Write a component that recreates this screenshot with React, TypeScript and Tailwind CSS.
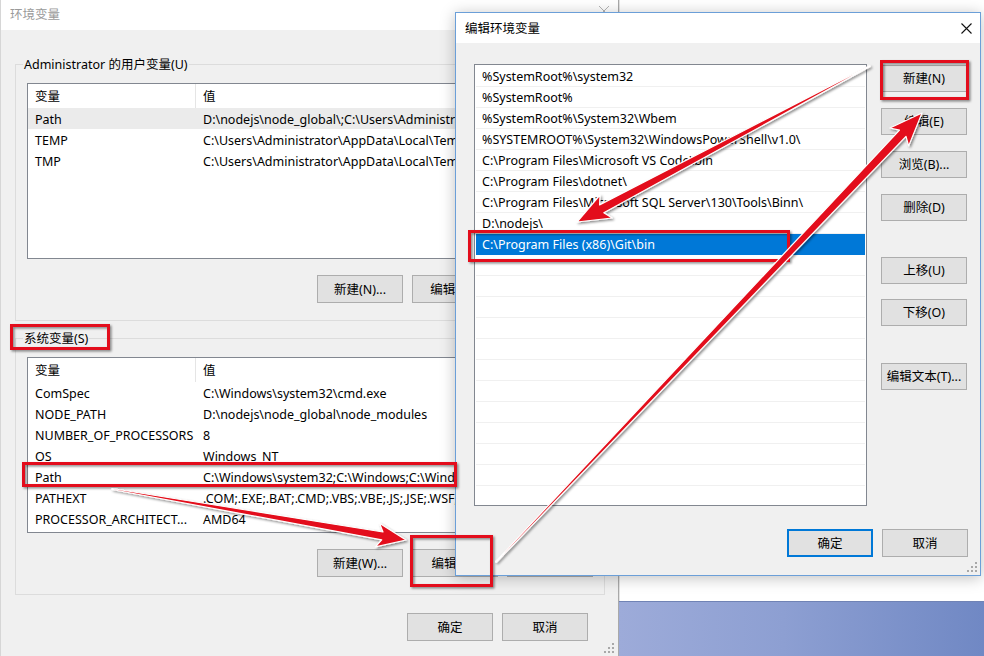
import React from "react";

type Row = [string, string];

const userRows: Row[] = [
  ["Path", "D:\\nodejs\\node_global\\;C:\\Users\\Administrator\\AppData\\Roaming\\npm"],
  ["TEMP", "C:\\Users\\Administrator\\AppData\\Local\\Temp"],
  ["TMP", "C:\\Users\\Administrator\\AppData\\Local\\Temp"],
];

const sysRows: Row[] = [
  ["ComSpec", "C:\\Windows\\system32\\cmd.exe"],
  ["NODE_PATH", "D:\\nodejs\\node_global\\node_modules"],
  ["NUMBER_OF_PROCESSORS", "8"],
  ["OS", "Windows_NT"],
  ["Path", "C:\\Windows\\system32;C:\\Windows;C:\\Windows\\System32\\Wbem;C:\\Windows\\System32"],
  ["PATHEXT", ".COM;.EXE;.BAT;.CMD;.VBS;.VBE;.JS;.JSE;.WSF;.WSH;.MSC"],
  ["PROCESSOR_ARCHITECT...", "AMD64"],
];

const pathRows = [
  "%SystemRoot%\\system32",
  "%SystemRoot%",
  "%SystemRoot%\\System32\\Wbem",
  "%SYSTEMROOT%\\System32\\WindowsPowerShell\\v1.0\\",
  "C:\\Program Files\\Microsoft VS Code\\bin",
  "C:\\Program Files\\dotnet\\",
  "C:\\Program Files\\Microsoft SQL Server\\130\\Tools\\Binn\\",
  "D:\\nodejs\\",
  "C:\\Program Files (x86)\\Git\\bin",
];

function Btn({
  children,
  focused = false,
}: {
  children: React.ReactNode;
  focused?: boolean;
}) {
  return (
    <div
      className={`w-[86px] h-[28px] shrink-0 flex items-center justify-center pt-[1px] text-black bg-[#e1e1e1] ${
        focused ? "border-2 border-[#0078d7]" : "border border-[#adadad]"
      }`}
    >
      {children}
    </div>
  );
}

function SideBtn({ children, mt }: { children: React.ReactNode; mt: string }) {
  return (
    <div
      className={`${mt} w-[86px] h-[27px] shrink-0 flex items-center justify-center pt-[1px] whitespace-nowrap text-black bg-[#e1e1e1] border border-[#adadad]`}
    >
      {children}
    </div>
  );
}

function VarList({ rows, highlight }: { rows: Row[]; highlight?: number }) {
  return (
    <div className="mt-[10px] mx-[11px] h-[176px] bg-white border border-[#828790] overflow-hidden flex flex-col">
      <div className="flex h-[24px] shrink-0">
        <div className="w-[168px] shrink-0 pl-[7px] pt-[1px] border-r border-[#e5e5e5] flex items-center">变量</div>
        <div className="pl-[7px] pt-[1px] flex items-center">值</div>
      </div>
      {rows.map(([k, v], i) => (
        <div
          key={i}
          className={`flex h-[21px] shrink-0 items-center pt-[2px] whitespace-nowrap ${
            i === highlight ? "bg-[#ebebeb]" : ""
          }`}
        >
          <div className="w-[168px] shrink-0 pl-[7px] overflow-hidden">{k}</div>
          <div className="pl-[7px]">{v}</div>
        </div>
      ))}
    </div>
  );
}

function Group({
  label,
  mt,
  pb,
  rows,
  highlight,
  buttons,
}: {
  label: string;
  mt: string;
  pb: string;
  rows: Row[];
  highlight?: number;
  buttons: string[];
}) {
  return (
    <div className={`${mt} ${pb} border border-[#dcdcdc] flex flex-col`}>
      <div className="-mt-[10px] ml-[7px] self-start px-[1px] h-[18px] leading-[19px] bg-[#f0f0f0] whitespace-nowrap">
        {label}
      </div>
      <VarList rows={rows} highlight={highlight} />
      <div className="mt-[16px] mr-[11px] flex justify-end gap-[9px]">
        {buttons.map((b) => (
          <Btn key={b}>{b}</Btn>
        ))}
      </div>
    </div>
  );
}

function Grip() {
  const dots = [
    [8, 0],
    [8, 4],
    [4, 4],
    [8, 8],
    [4, 8],
    [0, 8],
  ];
  return (
    <svg width="11" height="11" viewBox="0 0 11 11">
      {dots.map(([x, y], i) => (
        <rect key={i} x={x} y={y} width="2" height="2" fill="#a8a8a8" />
      ))}
    </svg>
  );
}

function arrowPts(
  tx: number,
  ty: number,
  hx: number,
  hy: number,
  w0: number,
  w1: number,
  L: number,
  hw: number
) {
  const dx = hx - tx;
  const dy = hy - ty;
  const len = Math.hypot(dx, dy);
  const ux = dx / len;
  const uy = dy / len;
  const nx = -uy;
  const ny = ux;
  const bx = hx - ux * L;
  const by = hy - uy * L;
  const wx = bx - ux * 5;
  const wy = by - uy * 5;
  const pts = [
    [tx + (nx * w0) / 2, ty + (ny * w0) / 2],
    [bx + (nx * w1) / 2, by + (ny * w1) / 2],
    [wx + nx * hw, wy + ny * hw],
    [hx, hy],
    [wx - nx * hw, wy - ny * hw],
    [bx - (nx * w1) / 2, by - (ny * w1) / 2],
    [tx - (nx * w0) / 2, ty - (ny * w0) / 2],
  ];
  return pts.map((p) => `${p[0].toFixed(1)},${p[1].toFixed(1)}`).join(" ");
}

function Annotations() {
  const red = "#e3101b";
  const boxes = [
    [11.5, 325.5, 97, 23],
    [23.5, 463.5, 432, 22],
    [411.5, 536.5, 80, 49],
    [469.5, 231.5, 319, 29],
    [881.5, 61.5, 86, 37],
  ];
  return (
    <svg
      className="absolute inset-0 pointer-events-none"
      width="984"
      height="656"
      viewBox="0 0 984 656"
    >
      <defs>
        <filter id="sh" x="-20%" y="-20%" width="140%" height="140%">
          <feDropShadow dx="1.5" dy="1.5" stdDeviation="1.2" floodColor="#000" floodOpacity="0.45" />
        </filter>
      </defs>
      <g filter="url(#sh)">
        {boxes.map(([x, y, w, h], i) => (
          <rect key={i} x={x} y={y} width={w} height={h} fill="none" stroke={red} strokeWidth="3" />
        ))}
        <polygon
          points={arrowPts(112, 489, 406, 540, 1, 8, 24, 12)}
          fill={red}
          stroke="#fff"
          strokeWidth="1.2"
          strokeLinejoin="round"
        />
        <polygon
          points={arrowPts(870, 66, 577, 222, 1, 9, 28, 13)}
          fill={red}
          stroke="#fff"
          strokeWidth="1.2"
          strokeLinejoin="round"
        />
        <polygon
          points={arrowPts(496, 562, 922, 113, 1, 9, 28, 13)}
          fill={red}
          stroke="#fff"
          strokeWidth="1.2"
          strokeLinejoin="round"
        />
      </g>
    </svg>
  );
}

export default function App() {
  return (
    <div className="relative w-[984px] h-[656px] overflow-hidden bg-white text-[12.5px] text-black font-['Noto_Sans','Noto_Sans_CJK_SC',sans-serif] leading-[16px]">
      <div className="flex h-full">
        {/* main window */}
        <div className="relative w-[619px] h-[656px] shrink-0 bg-[#f0f0f0] border-r border-l border-[#a9a9a9] border-l-[#d6d6d6] flex flex-col">
          <div className="h-[30px] shrink-0 bg-white flex items-center justify-between pl-[9px] pr-[9px] text-[#9a9a9a]">
            <span>环境变量</span>
            <svg width="10" height="10" viewBox="0 0 10 10" className="-mt-[8px]">
              <path d="M0 0L10 10M10 0L0 10" stroke="#b4b4b4" strokeWidth="1" />
            </svg>
          </div>
          <div className="pl-[14px] pr-[13px] flex flex-col">
            <Group
              label="Administrator 的用户变量(U)"
              mt="mt-[34px]"
              pb="pb-[17px]"
              rows={userRows}
              highlight={0}
              buttons={["新建(N)...", "编辑(E)...", "删除(D)"]}
            />
            <Group
              label="系统变量(S)"
              mt="mt-[17px]"
              pb="pb-[17px]"
              rows={sysRows}
              buttons={["新建(W)...", "编辑(I)...", "删除(L)"]}
            />
            <div className="mt-[18px] mr-[17px] flex justify-end gap-[9px]">
              <Btn>确定</Btn>
              <Btn>取消</Btn>
            </div>
          </div>
          <div className="absolute right-[3px] bottom-[2px]">
            <Grip />
          </div>
        </div>
        {/* desktop to the right */}
        <div className="flex-1 flex flex-col">
          <div className="flex-1 bg-white border-l border-[#e3e3e3]" />
          <div className="h-[55px] border-t border-[#7083b5] bg-[linear-gradient(90deg,#9dabd9_0%,#8d9fd2_45%,#7088c4_100%)]" />
        </div>
      </div>

      {/* edit dialog */}
      <div className="absolute left-[455px] top-[12px] w-[526px] h-[564px] border border-[#6b9fd8] bg-[#f0f0f0] flex flex-col shadow-[0_2px_14px_rgba(0,0,0,0.25)]">
        <div className="h-[30px] shrink-0 bg-white flex items-center justify-between pl-[9px] pr-[8px]">
          <span className="pt-[1px]">编辑环境变量</span>
          <svg width="11" height="11" viewBox="0 0 11 11">
            <path d="M0.5 0.5L10.5 10.5M10.5 0.5L0.5 10.5" stroke="#111" strokeWidth="1.1" />
          </svg>
        </div>
        <div className="flex pt-[21px] pl-[18px] pr-[12px]">
          <div className="w-[393px] h-[442px] shrink-0 bg-white border border-[#828790] p-[1px] overflow-hidden flex flex-col">
            {Array.from({ length: 22 }).map((_, i) => {
              const txt = pathRows[i];
              const sel = i === 8;
              return (
                <div
                  key={i}
                  className={`h-[21px] shrink-0 pl-[6px] pt-[2px] flex items-center whitespace-nowrap border-b ${
                    sel ? "bg-[#0078d7] text-white border-[#0078d7]" : "border-[#f0f0f0]"
                  }`}
                >
                  {txt ?? ""}
                </div>
              );
            })}
          </div>
          <div className="ml-[14px] flex flex-col">
            <SideBtn mt="mt-[1px]">新建(N)</SideBtn>
            <SideBtn mt="mt-[16px]">编辑(E)</SideBtn>
            <SideBtn mt="mt-[16px]">浏览(B)...</SideBtn>
            <SideBtn mt="mt-[16px]">删除(D)</SideBtn>
            <SideBtn mt="mt-[36px]">上移(U)</SideBtn>
            <SideBtn mt="mt-[15px]">下移(O)</SideBtn>
            <SideBtn mt="mt-[37px]">编辑文本(T)...</SideBtn>
          </div>
        </div>
        <div className="mt-[23px] pr-[12px] flex justify-end gap-[9px]">
          <Btn focused>确定</Btn>
          <Btn>取消</Btn>
        </div>
        <div className="absolute right-[2px] bottom-[2px]">
          <Grip />
        </div>
      </div>

      <Annotations />
    </div>
  );
}
